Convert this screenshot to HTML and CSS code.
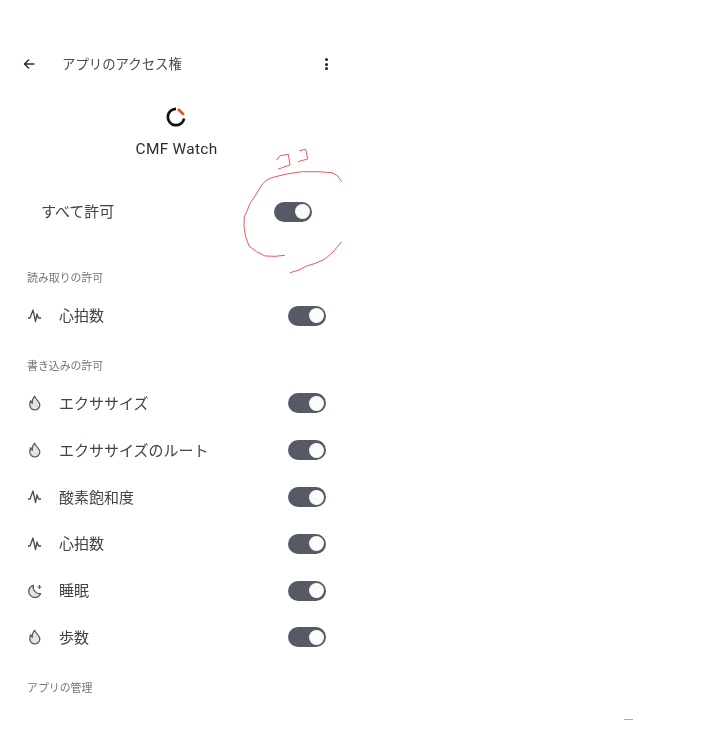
FILE: index.html
```html
<!DOCTYPE html>
<html lang="ja">
<head>
    <meta charset="UTF-8">
    <title>アプリのアクセス権</title>
    <link rel="stylesheet" href="styles.css">
</head>
<body>
    <svg width="0" height="0" class="defs">
        <symbol id="ic-pulse" viewBox="0 0 16 16">
            <path d="M1 10h2L6 2l2.500 11.500L10 6l1.500 4H14" fill="none" stroke="#4a4d52" stroke-width="1.300" stroke-linejoin="round"/>
        </symbol>
        <symbol id="ic-flame" viewBox="0 0 16 16">
            <path d="M7.800 1.200c.2 3 5 4.800 5 8.900a5 4.700 0 0 1-10 0c0-1.700.2-3 .8-4.400.4 1.300.8 2 1.800 2.500C5 5.800 6 3 7.800 1.200z" fill="#e2e3e5" stroke="#5c5e62" stroke-width="1.300" stroke-linejoin="round"/>
        </symbol>
        <symbol id="ic-moon" viewBox="0 0 16 16">
            <path d="M6.300 2.300a6.200 6.200 0 1 0 7.400 8.300C9.600 11.300 5.300 7.500 6.300 2.300z" fill="#e2e3e5" stroke="#5c5e62" stroke-width="1.300" stroke-linejoin="round"/>
            <path d="M12.500 2v4M10.500 4h4" stroke="#5c5e62" stroke-width="1.200"/>
        </symbol>
    </svg>

    <div class="screen">
        <header class="topbar">
            <svg class="back" width="12" height="12" viewBox="0 0 12 12">
                <path d="M11.500 6H1.500M6 1.500 1.500 6 6 10.500" fill="none" stroke="#2b2d30" stroke-width="1.400"/>
            </svg>
            <div class="title">アプリのアクセス権</div>
            <div class="kebab"><i></i><i></i><i></i></div>
        </header>

        <div class="app">
            <svg width="24" height="24" viewBox="0 0 24 24">
                <path d="M12 3.800A8.200 8.200 0 1 0 20.100 13.400" fill="none" stroke="#111" stroke-width="2.700"/>
                <path d="M14 4 19.800 9.700" stroke="#f0492c" stroke-width="2.600"/>
            </svg>
            <div class="app-name">CMF Watch</div>
        </div>

        <div class="row row-all">
            <div class="row-label">すべて許可</div>
            <div class="toggle"></div>
        </div>

        <div class="section">読み取りの許可</div>
        <div class="row">
            <svg class="icon"><use href="#ic-pulse"/></svg>
            <div class="row-label">心拍数</div>
            <div class="toggle"></div>
        </div>

        <div class="section">書き込みの許可</div>
        <div class="row">
            <svg class="icon"><use href="#ic-flame"/></svg>
            <div class="row-label">エクササイズ</div>
            <div class="toggle"></div>
        </div>
        <div class="row">
            <svg class="icon"><use href="#ic-flame"/></svg>
            <div class="row-label">エクササイズのルート</div>
            <div class="toggle"></div>
        </div>
        <div class="row">
            <svg class="icon"><use href="#ic-pulse"/></svg>
            <div class="row-label">酸素飽和度</div>
            <div class="toggle"></div>
        </div>
        <div class="row">
            <svg class="icon"><use href="#ic-pulse"/></svg>
            <div class="row-label">心拍数</div>
            <div class="toggle"></div>
        </div>
        <div class="row">
            <svg class="icon"><use href="#ic-moon"/></svg>
            <div class="row-label">睡眠</div>
            <div class="toggle"></div>
        </div>
        <div class="row">
            <svg class="icon"><use href="#ic-flame"/></svg>
            <div class="row-label">歩数</div>
            <div class="toggle"></div>
        </div>

        <div class="section section-last">アプリの管理</div>
    </div>

    <!-- 手書きの赤い囲み -->
    <svg class="scribble" width="707" height="736" viewBox="0 0 707 736">
        <g fill="none" stroke="#f0575c" stroke-width="1" stroke-linejoin="round">
            <path d="M341.700 181.700 336.700 175 331.700 172.700 318.300 171.700 301.700 171.700 285 174.300 271.700 177.700 265.700 180.700 261.700 185 255.700 195 250 203.300 246.700 211.700 244.300 216.700 244 226.700 245.700 236.700 249 246 256.700 251.700 265 256 275 256.300 285 255.300"/>
            <path d="M341.700 241.700 333 252 325 259 315 263.500 306.700 266 299 270 290 272.700"/>
            <path d="M276.700 160 280 155.700 288.300 154.300 290 165 278.300 169"/>
            <path d="M299.300 150.700 305.700 149.300 307.700 159 297.700 161.700"/>
        </g>
        <path d="M624 719.500H633" stroke="#f58a80" stroke-width="1"/>
    </svg>
</body>
</html>
```

FILE: styles.css
```css
body {
    margin: 0;
    background: #fff;
    font-family: "Noto Sans CJK JP", "Noto Sans", sans-serif;
    color: #3a3c40;
    position: relative;
    overflow: hidden;
    height: 736px;
}

.defs {
    position: absolute;
}

.screen {
    width: 299px;
    padding: 44px 0 0 27px;
    filter: blur(0.35px);
}

.topbar {
    display: flex;
    align-items: center;
    height: 40px;
}

.back {
    margin-left: -4px;
}

.title {
    flex: 1;
    margin-left: 27px;
    padding-bottom: 2px;
    font-size: 13.400px;
    color: #4a4c50;
}

.kebab {
    display: flex;
    flex-direction: column;
    align-items: center;
    gap: 1.500px;
    width: 4px;
    margin-right: -2.500px;
}

.kebab i {
    width: 3px;
    height: 3px;
    border-radius: 50%;
    background: #1c1e20;
}

.app {
    display: flex;
    flex-direction: column;
    align-items: center;
    margin: 21px 0 0 -27px;
    width: 353px;
}

.app svg {
    display: block;
    margin-left: -1px;
}

.app-name {
    margin-top: 10px;
    line-height: 20px;
    font-family: Roboto, sans-serif;
    font-size: 15.400px;
    font-weight: 400;
    letter-spacing: 0.300px;
    color: #2a2c2f;
}

.row {
    display: flex;
    align-items: center;
    height: 46.800px;
}

.row-all {
    margin-top: 29.500px;
    margin-bottom: 34.500px;
    padding-left: 14px;
    width: 271px;
}

.icon {
    width: 16px;
    height: 16px;
    flex: none;
    margin-right: 16px;
}

.row-label {
    flex: 1;
    padding-bottom: 2px;
    font-size: 15px;
    color: #3f4247;
}

.section {
    font-size: 10.900px;
    line-height: 15px;
    padding-bottom: 1px;
    color: #73767c;
    margin-top: 18.500px;
    margin-bottom: 6.500px;
}

.row-all + .section {
    margin-top: 0;
}

.section-last {
    margin-top: 19px;
}

.toggle {
    position: relative;
    width: 38px;
    height: 20px;
    flex: none;
    border-radius: 10px;
    background: #555a65;
}

.toggle::after {
    content: "";
    position: absolute;
    top: 2.500px;
    right: 2.500px;
    width: 15px;
    height: 15px;
    border-radius: 50%;
    background: #fbfbfc;
}

.scribble {
    position: absolute;
    top: 0;
    left: 0;
    pointer-events: none;
}
```
